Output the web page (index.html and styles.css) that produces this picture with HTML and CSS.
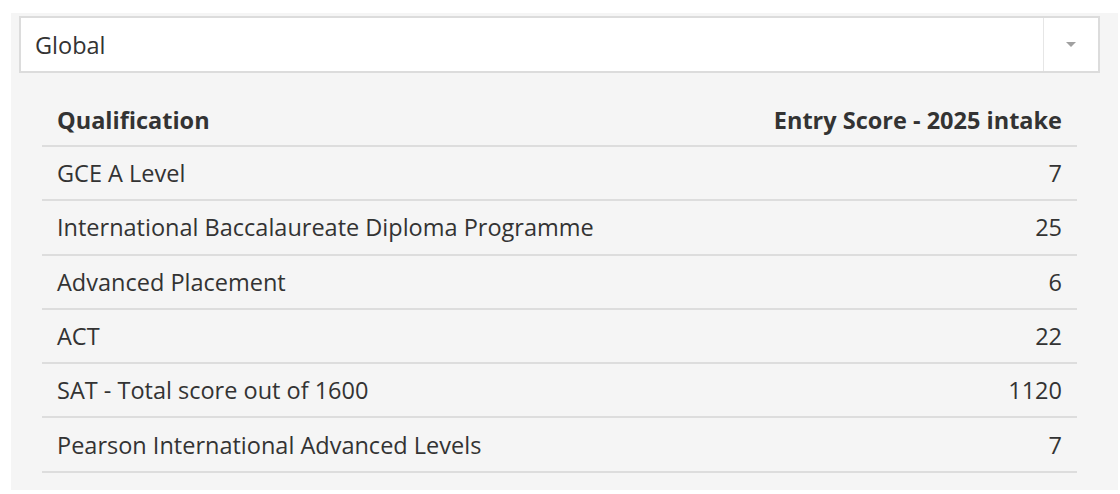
FILE: index.html
```html
<!DOCTYPE html>
<html>
<head>
<meta charset="utf-8">
<link rel="stylesheet" href="styles.css">
</head>
<body>
<div class="panel">
  <div class="select">
    <div class="select-value">Global</div>
    <div class="select-arrow"><span class="caret"></span></div>
  </div>
  <table class="scores">
    <thead>
      <tr><th class="q">Qualification</th><th class="s">Entry Score - 2025 intake</th></tr>
    </thead>
    <tbody>
      <tr><td class="q">GCE A Level</td><td class="s">7</td></tr>
      <tr><td class="q">International Baccalaureate Diploma Programme</td><td class="s">25</td></tr>
      <tr><td class="q">Advanced Placement</td><td class="s">6</td></tr>
      <tr><td class="q">ACT</td><td class="s">22</td></tr>
      <tr><td class="q">SAT - Total score out of 1600</td><td class="s">1120</td></tr>
      <tr><td class="q">Pearson International Advanced Levels</td><td class="s">7</td></tr>
    </tbody>
  </table>
</div>
</body>
</html>
```
FILE: styles.css
```css
html, body { margin: 0; padding: 0; background: #fff; }
body {
  font-family: "Open Sans", "Noto Sans", sans-serif;
  color: #333;
}
.panel {
  margin: 13px 2px 0 11px;
  height: 477px;
  background: #f5f5f5;
  padding: 3px 18px 0 8px;
  box-sizing: border-box;
}
.select {
  display: flex;
  height: 57px;
  background: #fff;
  border: 2px solid #dcdcdc;
  box-sizing: border-box;
}
.select-value {
  flex: 1;
  display: flex;
  align-items: center;
  padding-left: 14px;
  font-size: 23.5px;
  color: #333;
}
.select-arrow {
  width: 54px;
  border-left: 1px solid #e6e6e6;
  display: flex;
  align-items: center;
  justify-content: center;
}
.caret {
  width: 0; height: 0;
  border-left: 5.5px solid transparent;
  border-right: 5.5px solid transparent;
  border-top: 5px solid #a0a0a0;
}
.scores {
  margin: 0 23px 0 23px;
  width: calc(100% - 46px);
  border-collapse: collapse;
  font-size: 23.5px;
}
.scores th {
  font-weight: 700;
  height: 73px;
  box-sizing: border-box;
  padding: 22px 15px 0;
  border-bottom: 2px solid #ddd;
}
.scores td {
  height: 52.3px;
  padding: 0 15px;
  border-bottom: 2px solid #ddd;
}
.q { text-align: left; }
.s { text-align: right; }
```
